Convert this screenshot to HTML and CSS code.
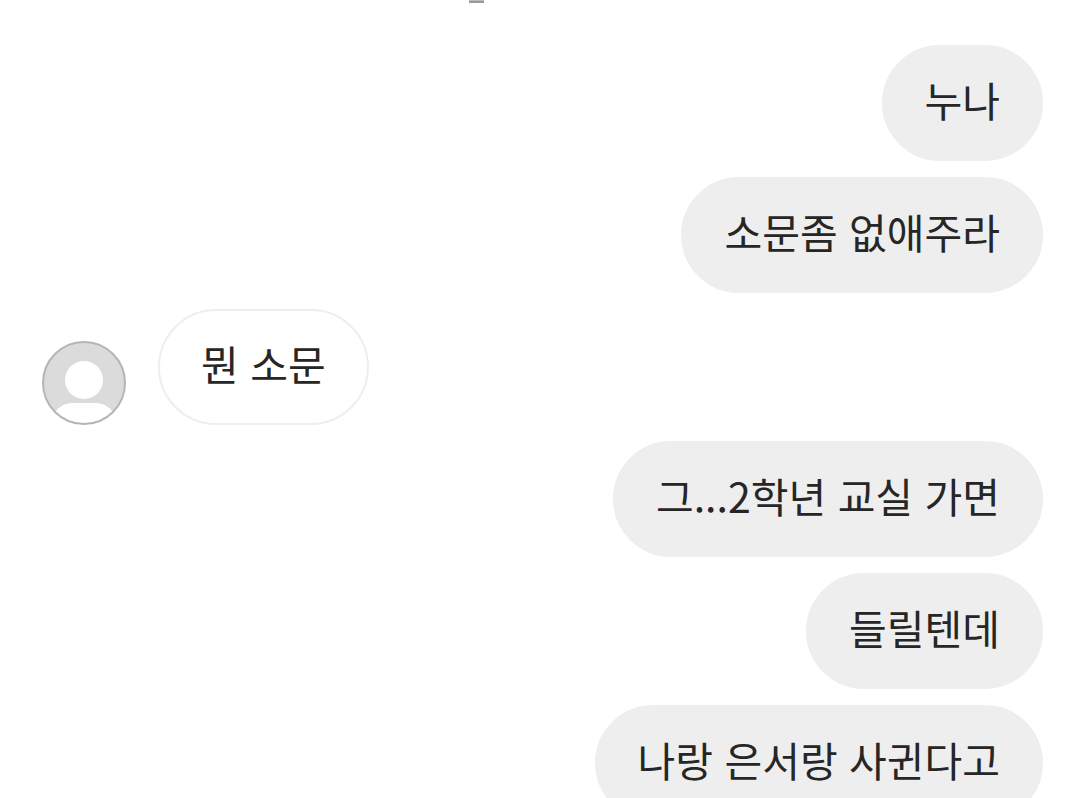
FILE: index.html
```html
<!DOCTYPE html>
<html lang="ko">
<head>
<meta charset="utf-8">
<meta name="viewport" content="width=device-width, initial-scale=1">
<title>대화</title>
<link rel="stylesheet" href="styles.css">
</head>
<body>
<main class="chat">
  <div class="divider"><span class="divider-mark"></span></div>
  <ol class="messages">
    <li class="message sent"><p class="bubble">누나</p></li>
    <li class="message sent"><p class="bubble">소문좀 없애주라</p></li>
    <li class="message received">
      <svg class="avatar" viewBox="0 0 84 84" role="img" aria-label="프로필">
        <clipPath id="face"><circle cx="42" cy="42" r="41"/></clipPath>
        <circle cx="42" cy="42" r="41" fill="#dbdbdb"/>
        <g clip-path="url(#face)" fill="#fff">
          <circle cx="42" cy="39" r="19"/>
          <path d="M10 84V76C15 67 21 62 31 62H53C63 62 69 67 74 76V84Z"/>
        </g>
        <circle cx="42" cy="42" r="41" fill="none" stroke="#b5b5b5" stroke-width="2"/>
      </svg>
      <p class="bubble">뭔 소문</p>
    </li>
    <li class="message sent"><p class="bubble">그...2학년 교실 가면</p></li>
    <li class="message sent"><p class="bubble">들릴텐데</p></li>
    <li class="message sent"><p class="bubble">나랑 은서랑 사귄다고</p></li>
  </ol>
</main>
</body>
</html>
```
FILE: styles.css
```css
* { box-sizing: border-box; }
body {
  margin: 0;
  background: #fff;
  color: #262626;
  font-family: "Noto Sans CJK KR", sans-serif;
  font-size: 41px;
  font-weight: 400;
  line-height: 60px;
}
.chat {
  height: 100vh;
  overflow: hidden;
  padding: 0 37px 0 42px;
}
.divider {
  display: flex;
  justify-content: center;
  height: 45px;
  padding-right: 132px;
}
.divider-mark {
  width: 15px;
  height: 3px;
  border-top: 1px solid #bbb;
  background: #999;
}
.messages {
  display: flex;
  flex-direction: column;
  gap: 16px;
  margin: 0;
  padding: 0;
  list-style: none;
}
.message {
  display: flex;
  align-items: flex-end;
  gap: 32px;
}
.sent { justify-content: flex-end; }
.bubble {
  margin: 0;
  padding: 22px 41px 30px;
  border: 2px solid #eee;
  border-radius: 58px;
}
.sent .bubble { background: #eee; }
.avatar {
  flex: none;
  width: 84px;
  height: 84px;
}
```
